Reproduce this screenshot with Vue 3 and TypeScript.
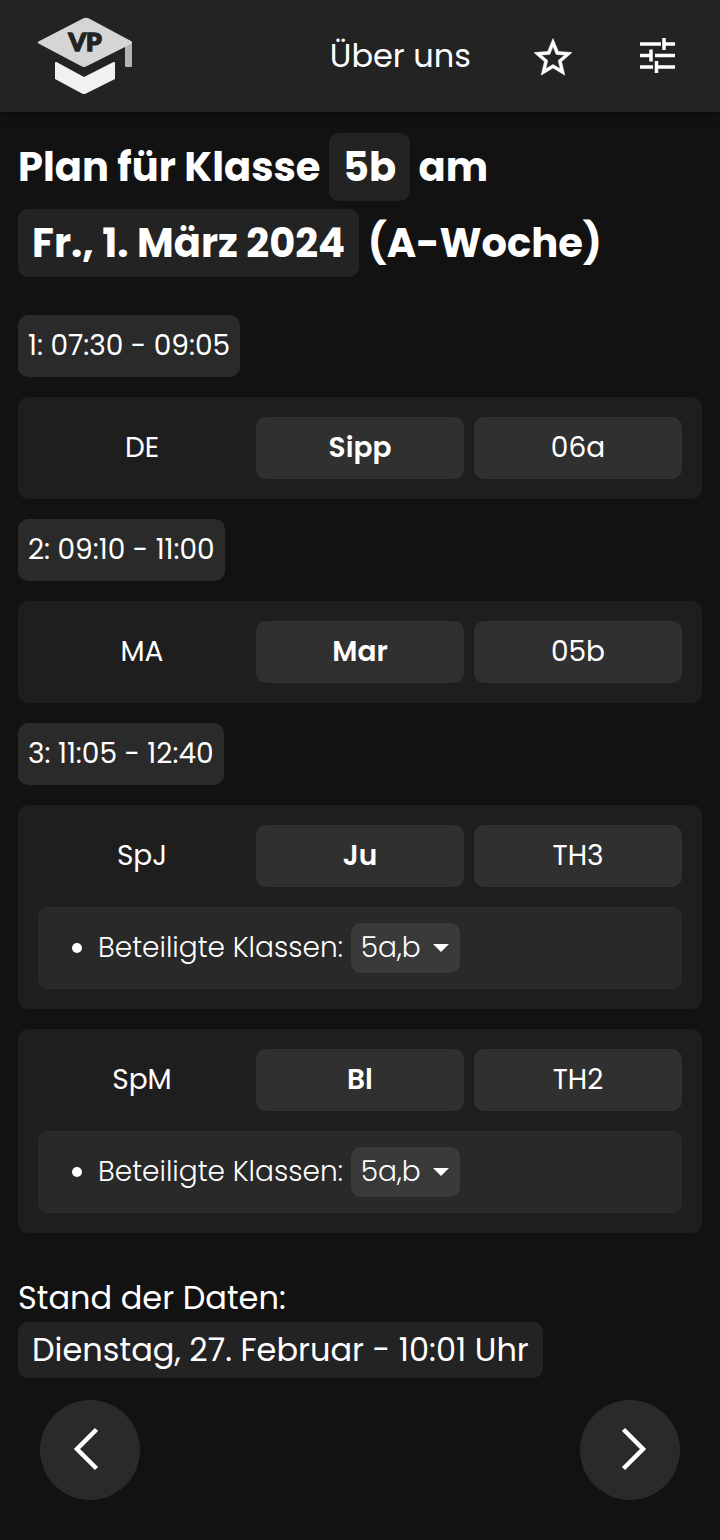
<script setup lang="ts">
interface Lesson {
  subject: string
  teacher: string
  room: string
  classes?: string
}
interface Block {
  id: number
  time: string
  lessons: Lesson[]
}

const blocks: Block[] = [
  { id: 1, time: '07:30 - 09:05', lessons: [{ subject: 'DE', teacher: 'Sipp', room: '06a' }] },
  { id: 2, time: '09:10 - 11:00', lessons: [{ subject: 'MA', teacher: 'Mar', room: '05b' }] },
  {
    id: 3,
    time: '11:05 - 12:40',
    lessons: [
      { subject: 'SpJ', teacher: 'Ju', room: 'TH3', classes: '5a,b' },
      { subject: 'SpM', teacher: 'Bl', room: 'TH2', classes: '5a,b' },
    ],
  },
]
</script>

<template>
  <div class="page">
    <header class="topbar">
      <a class="logo" href="#" aria-label="VP">
        <svg viewBox="0 0 96 78" width="96" height="78">
          <path d="M88 29l7-4v24q0 1-1 1h-5q-1 0-1-1z" fill="#b4b4b4" />
          <path d="M46 1.500q3-1.500 6 0l42 22.500q2 1.500 0 3L50 49q-3 2-6 0L1.500 26.500q-1.500-1 0-2z" fill="#d5d5d5" />
          <path d="M18 46q0-1.500 1.500-1L47 60l29.500-15q1.500-.5 1.500 1v16L50 76q-3 2-6 0L18 62z" fill="#f1f1f1" />
          <text x="48" y="34" text-anchor="middle" class="logo-text">VP</text>
        </svg>
      </a>
      <nav class="nav">
        <a class="about" href="#">Über uns</a>
        <button class="icon" type="button" aria-label="Favoriten">
          <svg viewBox="0 -1 24 24" width="48" height="48" fill="#fff" stroke="#fff" stroke-width="0.25">
            <path d="M21.500 9.300l-6.800-.6L12 2.300 9.300 8.700l-6.800.6 5.200 4.500-1.600 6.800L12 17l5.900 3.600-1.600-6.800zM12 15.200l-3.600 2.200 1-4.100-3.200-2.800 4.200-.3L12 6.300l1.600 3.900 4.200.3-3.200 2.800 1 4.100z" />
          </svg>
        </button>
        <button class="icon" type="button" aria-label="Einstellungen">
          <svg viewBox="0 0 46 46" width="46" height="46" fill="none" stroke="#fff" stroke-width="3.5">
            <path d="M5 11h21M29 11h11M29 5v12M5 22.500h11M20 22.500h20M16 16.500v12M5 34h13M22 34h18M21.500 28v12" />
          </svg>
        </button>
      </nav>
    </header>

    <main class="content">
      <h1 class="title">
        Plan für Klasse <button class="pick" type="button">5b</button> am
        <button class="pick" type="button">Fr., 1. März 2024</button> (A-Woche)
      </h1>

      <section v-for="block in blocks" :key="block.id" class="block">
        <h2 class="time">{{ block.id }}: {{ block.time }}</h2>
        <article v-for="lesson in block.lessons" :key="lesson.subject" class="card">
          <div class="row">
            <span class="cell">{{ lesson.subject }}</span>
            <button class="cell chip strong" type="button">{{ lesson.teacher }}</button>
            <button class="cell chip" type="button">{{ lesson.room }}</button>
          </div>
          <ul v-if="lesson.classes" class="info">
            <li>
              <label :for="'classes-' + lesson.subject">Beteiligte Klassen:</label>
              <span class="drop">
                <select :id="'classes-' + lesson.subject">
                  <option>{{ lesson.classes }}</option>
                </select>
                <svg viewBox="0 0 16 8" width="16" height="8"><path d="M0 0h16L8 8z" fill="#fff" /></svg>
              </span>
            </li>
          </ul>
        </article>
      </section>

      <p class="status">Stand der Daten:<br /><span class="stamp">Dienstag, 27. Februar - 10:01 Uhr</span></p>
    </main>

    <footer class="pager">
      <button class="round" type="button" aria-label="Vorheriger Tag">
        <svg viewBox="0 0 100 100"><path d="M56.500 29.500L37 49l19.500 19.500" /></svg>
      </button>
      <button class="round" type="button" aria-label="Nächster Tag">
        <svg viewBox="0 0 100 100"><path d="M43.500 29.500L63 49 43.500 68.500" /></svg>
      </button>
    </footer>
  </div>
</template>

<style>
body {
  margin: 0;
  background: #121212;
}
</style>

<style scoped>
.page {
  min-height: 100vh;
  display: flex;
  flex-direction: column;
  box-sizing: border-box;
  background: #121212;
  color: #fff;
  font-family: Poppins, Inter, "Open Sans", sans-serif;
  font-size: 28px;
  line-height: 42px;
}
button,
select {
  font: inherit;
  color: inherit;
  border: 0;
  margin: 0;
  padding: 0;
  background: none;
}
svg {
  display: block;
}
.topbar {
  display: flex;
  justify-content: space-between;
  align-items: center;
  height: 112px;
  padding: 0 39px 0 37px;
  background: #232323;
  box-shadow: 0 0 10px rgba(0, 0, 0, 0.5);
}
.logo-text {
  font-family: Lato, sans-serif;
  font-size: 25px;
  font-weight: 900;
  fill: #232323;
  stroke: #232323;
  stroke-width: 1.5px;
}
.nav {
  display: flex;
  align-items: center;
  gap: 58px;
}
.about {
  font-size: 32px;
  color: #fff;
  text-decoration: none;
}
.content {
  padding: 17px 18px 0;
}
.title {
  margin: 0 0 34px;
  font-size: 40px;
  line-height: 76px;
  font-weight: 700;
}
.pick {
  padding: 0 14px;
  height: 68px;
  line-height: 68px;
  border-radius: 10px;
  background: #232323;
}
.block {
  display: flex;
  flex-direction: column;
  align-items: flex-start;
  gap: 20px;
  margin-bottom: 20px;
}
.time {
  margin: 0;
  padding: 10px;
  font-size: 28px;
  font-weight: 400;
  border-radius: 10px;
  background: #2a2a2a;
}
.card {
  display: flex;
  flex-direction: column;
  gap: 20px;
  align-self: stretch;
  padding: 20px;
  border-radius: 10px;
  background: #1e1e1e;
}
.row {
  display: grid;
  grid-template-columns: repeat(3, 1fr);
  gap: 10px;
}
.cell {
  padding: 10px;
  text-align: center;
}
.chip {
  border-radius: 10px;
  background: #303030;
}
.strong {
  font-weight: 600;
}
.info {
  margin: 0;
  padding: 16px 20px 16px 60px;
  border-radius: 10px;
  background: #292929;
  font-weight: 300;
}
.info li {
  line-height: 50px;
}
.drop {
  display: inline-grid;
  align-items: center;
  vertical-align: top;
  margin-left: 8px;
  border-radius: 10px;
  background: #3a3a3a;
}
.drop select {
  grid-area: 1 / 1;
  appearance: none;
  height: 50px;
  padding: 0 39px 0 10px;
}
.drop svg {
  grid-area: 1 / 1;
  justify-self: end;
  margin-right: 11px;
  pointer-events: none;
}
.status {
  margin: 41px 0 0;
  font-size: 32px;
  line-height: 48px;
}
.stamp {
  display: inline-block;
  padding: 4px 14px;
  border-radius: 10px;
  background: #232323;
}
.pager {
  display: flex;
  justify-content: space-between;
  margin-top: auto;
  padding: 20px 40px 40px;
}
.round {
  width: 100px;
  height: 100px;
  border-radius: 50%;
  background: #2a2a2a;
}
.round path {
  fill: none;
  stroke: #fff;
  stroke-width: 4.5;
}
</style>
